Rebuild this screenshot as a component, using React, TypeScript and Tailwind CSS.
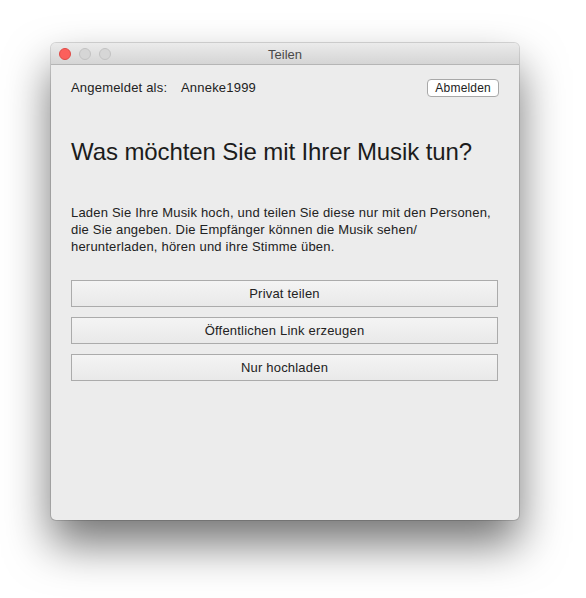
import React from "react";

export default function App() {
  const font = { fontFamily: '"Liberation Sans", Arial, sans-serif' };
  return (
    <div className="w-[586px] h-[598px] bg-white pt-[43px] pl-[51px]" style={font}>
      <div className="w-[468px] h-[477px] rounded-[5px] bg-[#ececec] flex flex-col overflow-hidden shadow-[0_24px_45px_rgba(0,0,0,0.55),0_0_0_1px_rgba(0,0,0,0.14)]">
        <div className="h-[22px] shrink-0 relative flex items-center justify-center bg-gradient-to-b from-[#ebebeb] to-[#d5d5d5] border-b border-[#b5b5b5]">
          <div className="absolute left-[8px] top-[5px] flex gap-[8px]">
            <div className="w-[12px] h-[12px] rounded-full bg-[#fc605c] border border-[#de4a46]" />
            <div className="w-[12px] h-[12px] rounded-full bg-[#d6d6d6] border border-[#c2c2c2]" />
            <div className="w-[12px] h-[12px] rounded-full bg-[#d6d6d6] border border-[#c2c2c2]" />
          </div>
          <span className="text-[13px] text-[#4a4a4a] leading-none mt-[1px]">Teilen</span>
        </div>
        <div className="flex flex-col pl-[20px] pr-[21px]">
          <div className="flex items-center h-[18px] mt-[14px]">
            <span className="text-[13px] text-[#222] w-[110px] tracking-[0.2px]">Angemeldet als:</span>
            <span className="text-[13px] text-[#222] tracking-[0.2px]">Anneke1999</span>
            <button className="ml-auto -mr-[1px] h-[18px] px-[7px] rounded-[4px] bg-white border border-[#a8a8a8] text-[12px] text-[#222] leading-none tracking-[0.2px]">
              Abmelden
            </button>
          </div>
          <h1 className="mt-[40px] text-[24px] leading-[30px] text-[#1c1c1c] tracking-[-0.1px]">
            Was möchten Sie mit Ihrer Musik tun?
          </h1>
          <p className="mt-[37px] text-[13px] leading-[17px] text-[#222] tracking-[0.2px] whitespace-nowrap">
            Laden Sie Ihre Musik hoch, und teilen Sie diese nur mit den Personen,
            <br />
            die Sie angeben. Die Empfänger können die Musik sehen/
            <br />
            herunterladen, hören und ihre Stimme üben.
          </p>
          <div className="mt-[25px] flex flex-col gap-[10px]">
            {["Privat teilen", "Öffentlichen Link erzeugen", "Nur hochladen"].map((t) => (
              <button
                key={t}
                className="h-[27px] w-full border border-[#ababab] bg-gradient-to-b from-[#f4f4f4] to-[#e9e9e9] text-[13px] text-[#222] tracking-[0.2px]"
              >
                {t}
              </button>
            ))}
          </div>
        </div>
      </div>
    </div>
  );
}
